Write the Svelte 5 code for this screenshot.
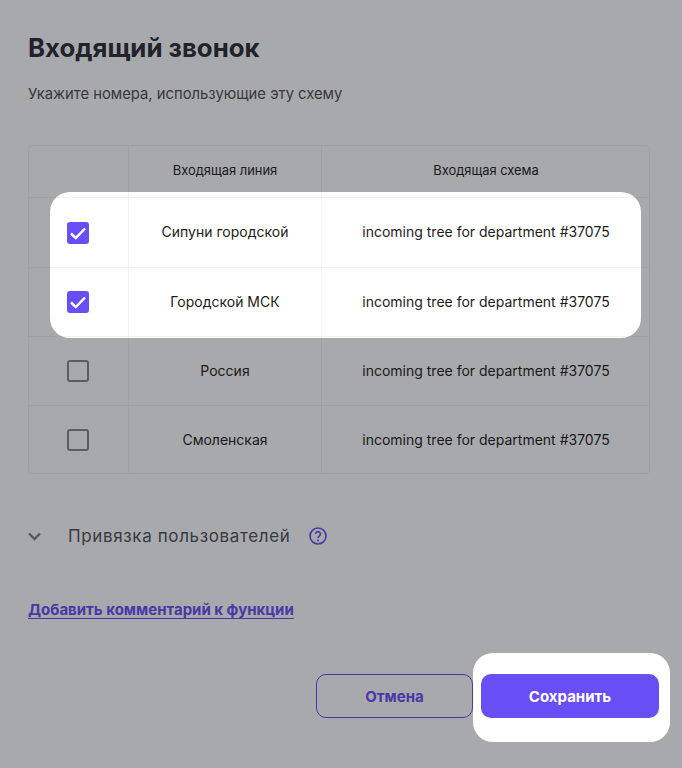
<script lang="ts">
  const rows = [
    { name: 'Сипуни городской', scheme: 'incoming tree for department #37075', checked: true },
    { name: 'Городской МСК', scheme: 'incoming tree for department #37075', checked: true },
    { name: 'Россия', scheme: 'incoming tree for department #37075', checked: false },
    { name: 'Смоленская', scheme: 'incoming tree for department #37075', checked: false },
  ];

  // tour overlay: full page minus two rounded cut-outs
  const hole = (x: number, y: number, w: number, h: number, r: number) =>
    `M${x + r} ${y}h${w - 2 * r}a${r} ${r} 0 0 1 ${r} ${r}v${h - 2 * r}a${r} ${r} 0 0 1 -${r} ${r}h-${w - 2 * r}a${r} ${r} 0 0 1 -${r} -${r}v-${h - 2 * r}a${r} ${r} 0 0 1 ${r} -${r}z`;
  const dim = `M0 0H682V768H0z${hole(50, 192, 591, 146, 20)}${hole(473, 653, 197, 89, 20)}`;
</script>

<div class="page">
  <h1>Входящий звонок</h1>
  <p class="hint">Укажите номера, использующие эту схему</p>

  <div class="table">
    <div class="cell head"></div>
    <div class="cell head"><span>Входящая линия</span></div>
    <div class="cell head last"><span>Входящая схема</span></div>
    {#each rows as row, i}
      <div class="cell" class:bottom={i === rows.length - 1}>
        <span class="check" class:on={row.checked}>
          {#if row.checked}
            <svg viewBox="0 0 22 22" width="22" height="22" aria-hidden="true">
              <path d="M4 11.5l4.8 4.6L18 6.5" fill="none" stroke="#fff" stroke-width="2.5" />
            </svg>
          {/if}
        </span>
      </div>
      <div class="cell" class:bottom={i === rows.length - 1}><span>{row.name}</span></div>
      <div class="cell last" class:bottom={i === rows.length - 1}><span>{row.scheme}</span></div>
    {/each}
  </div>

  <div class="binding">
    <svg class="chevron" viewBox="0 0 14 9" width="14" height="9" aria-hidden="true">
      <path d="M1 1.5L6.5 7 12 1.5" fill="none" stroke="#7d7e87" stroke-width="2.4" />
    </svg>
    <span class="binding-label">Привязка пользователей</span>
    <svg class="help" viewBox="0 0 18 18" width="18" height="18" aria-hidden="true">
      <circle cx="9" cy="9" r="8" fill="none" stroke="#674ef5" stroke-width="1.7" />
      <path d="M6.6 7.1a2.4 2.4 0 1 1 3.7 2c-.9.6-1.3 1-1.3 2" fill="none" stroke="#674ef5" stroke-width="1.6" />
      <circle cx="9" cy="13.4" r="1" fill="#674ef5" />
    </svg>
  </div>

  <a class="comment" href="#comment">Добавить комментарий к функции</a>

  <div class="actions">
    <button class="btn cancel">Отмена</button>
    <button class="btn save">Сохранить</button>
  </div>

  <svg class="overlay" viewBox="0 0 682 768" aria-hidden="true">
    <path d={dim} fill-rule="evenodd" fill="#14151f" fill-opacity="0.37" />
  </svg>
</div>

<style>
  :global(body) {
    margin: 0;
    background: #fff;
  }
  .page {
    position: relative;
    box-sizing: border-box;
    width: 682px;
    height: 768px;
    padding: 31px 32px 0 28px;
    overflow: hidden;
    background: #fff;
    color: #1b1b20;
    font-family: Inter, "Noto Sans", sans-serif;
  }
  h1 {
    margin: 0;
    font-size: 25.8px;
    line-height: 34px;
    font-weight: 700;
    color: #2a2a33;
  }
  .hint {
    margin: 19px 0 0;
    font-size: 14.8px;
    line-height: 20px;
    color: #4c4c52;
  }
  .table {
    display: grid;
    grid-template-columns: 100px 193px 327px;
    grid-template-rows: 52px 70px 69px 69px 67px;
    width: 622px;
    margin-top: 41px;
    box-sizing: border-box;
    border: 1px solid #f2f2f4;
    border-radius: 4px;
  }
  .cell {
    display: flex;
    align-items: center;
    justify-content: center;
    border-right: 1px solid #f2f2f4;
    border-bottom: 1px solid #f2f2f4;
    font-size: 14px;
    color: #1b1b20;
  }
  .cell span:not(.check) {
    margin-bottom: 2px;
  }
  .cell.bottom span:not(.check) {
    margin-bottom: 0;
  }
  .cell.last span {
    margin-left: 1px;
  }
  .head {
    font-size: 12.9px;
  }
  .last {
    border-right: 0;
  }
  .bottom {
    border-bottom: 0;
  }
  .check {
    box-sizing: border-box;
    width: 22px;
    height: 22px;
    margin-right: 1px;
    border: 2px solid #868791;
    border-radius: 3px;
  }
  .check.on {
    border: 0;
    background: #674ef5;
  }
  .check svg {
    display: block;
  }
  .binding {
    display: flex;
    align-items: center;
    margin-top: 51px;
    height: 22px;
  }
  .chevron {
    flex: none;
  }
  .binding-label {
    margin-left: 26px;
    font-size: 17px;
    letter-spacing: 0.63px;
    color: #505056;
  }
  .help {
    margin-left: 19px;
  }
  .comment {
    display: inline-block;
    margin-top: 53px;
    font-size: 15px;
    line-height: 20px;
    font-weight: 700;
    color: #674ef5;
    text-decoration: underline;
    text-underline-offset: 3px;
  }
  .actions {
    display: flex;
    justify-content: flex-end;
    gap: 8px;
    margin-top: 54px;
    margin-right: -9px;
  }
  .btn {
    box-sizing: border-box;
    height: 44px;
    border-radius: 10px;
    font-family: inherit;
    font-size: 15px;
    font-weight: 700;
  }
  .cancel {
    width: 157px;
    border: 1px solid #674ef5;
    background: transparent;
    color: #674ef5;
  }
  .save {
    width: 178px;
    border: 0;
    background: #674ef5;
    color: #fff;
  }
  .overlay {
    position: absolute;
    inset: 0;
    width: 682px;
    height: 768px;
    pointer-events: none;
  }
</style>
